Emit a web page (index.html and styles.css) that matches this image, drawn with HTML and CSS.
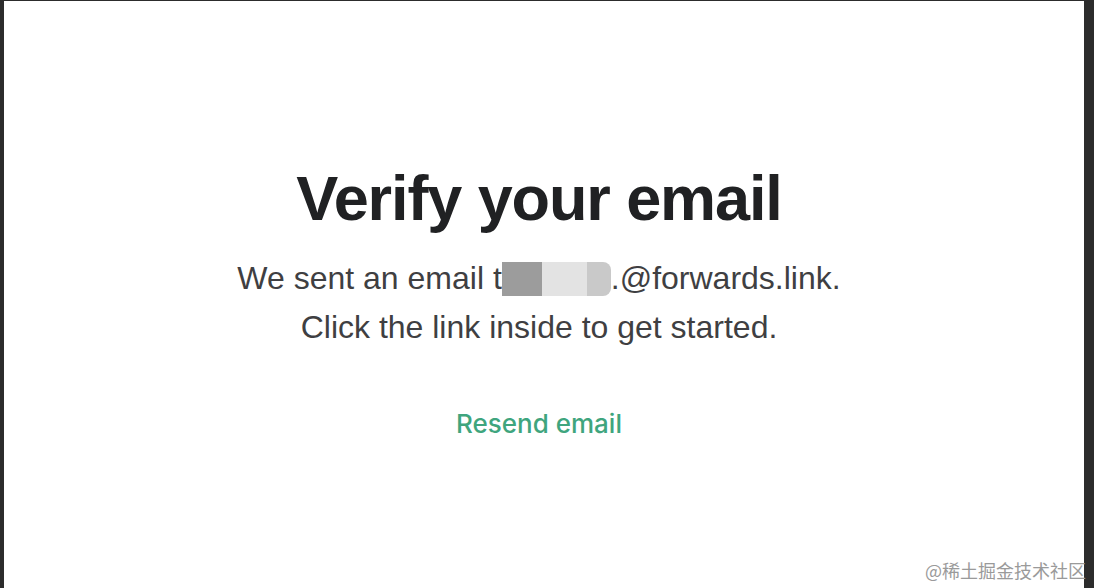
FILE: index.html
```html
<!DOCTYPE html>
<html lang="en">
<head>
  <meta charset="UTF-8" />
  <title>Verify your email</title>
  <link rel="stylesheet" href="styles.css">
</head>
<body>
  <div class="frame">
    <main class="verify">
      <h1 class="title">Verify your email</h1>
      <p class="message">
        We sent an email t<span class="redact"><span class="r1"></span><span class="r2"></span><span class="r3"></span></span>.@forwards.link.<br>
        Click the link inside to get started.
      </p>
      <button class="resend">Resend email</button>
    </main>
    <div class="watermark">@稀土掘金技术社区</div>
  </div>
</body>
</html>
```

FILE: styles.css
```css
html, body {
  margin: 0;
  padding: 0;
  height: 100%;
  overflow: hidden;
  background: #2c2c2c;
  font-family: 'Liberation Sans', Arial, sans-serif;
}

.frame {
  position: relative;
  margin: 1px 10px 0 4px;
  height: 587px;
  background: #fff;
}

.verify {
  display: flex;
  flex-direction: column;
  align-items: center;
  padding: 157px 10px 0 0;
  text-align: center;
}

.title {
  margin: 0;
  font-size: 63px;
  font-weight: 700;
  line-height: 80px;
  letter-spacing: -1.1px;
  color: #202123;
}

.message {
  margin: 16px 0 0;
  font-size: 32px;
  line-height: 49px;
  color: #3f3f42;
}

.redact {
  display: inline-flex;
  vertical-align: -7px;
  height: 34px;
}

.redact span {
  display: block;
  height: 100%;
}

.r1 { width: 40px; background: #9c9c9c; }
.r2 { width: 45px; background: #e3e3e3; }
.r3 { width: 24px; background: #c9c9c9; border-radius: 0 8px 8px 0; }

.resend {
  margin-top: 56px;
  padding: 0;
  border: 0;
  background: none;
  font-family: Inter, sans-serif;
  font-size: 26px;
  font-weight: 500;
  color: #3fa57e;
  cursor: pointer;
}

.watermark {
  position: absolute;
  right: -2px;
  bottom: 5px;
  font-family: 'Noto Sans CJK SC', sans-serif;
  font-size: 18px;
  color: #9a9a9a;
  white-space: nowrap;
}
```
